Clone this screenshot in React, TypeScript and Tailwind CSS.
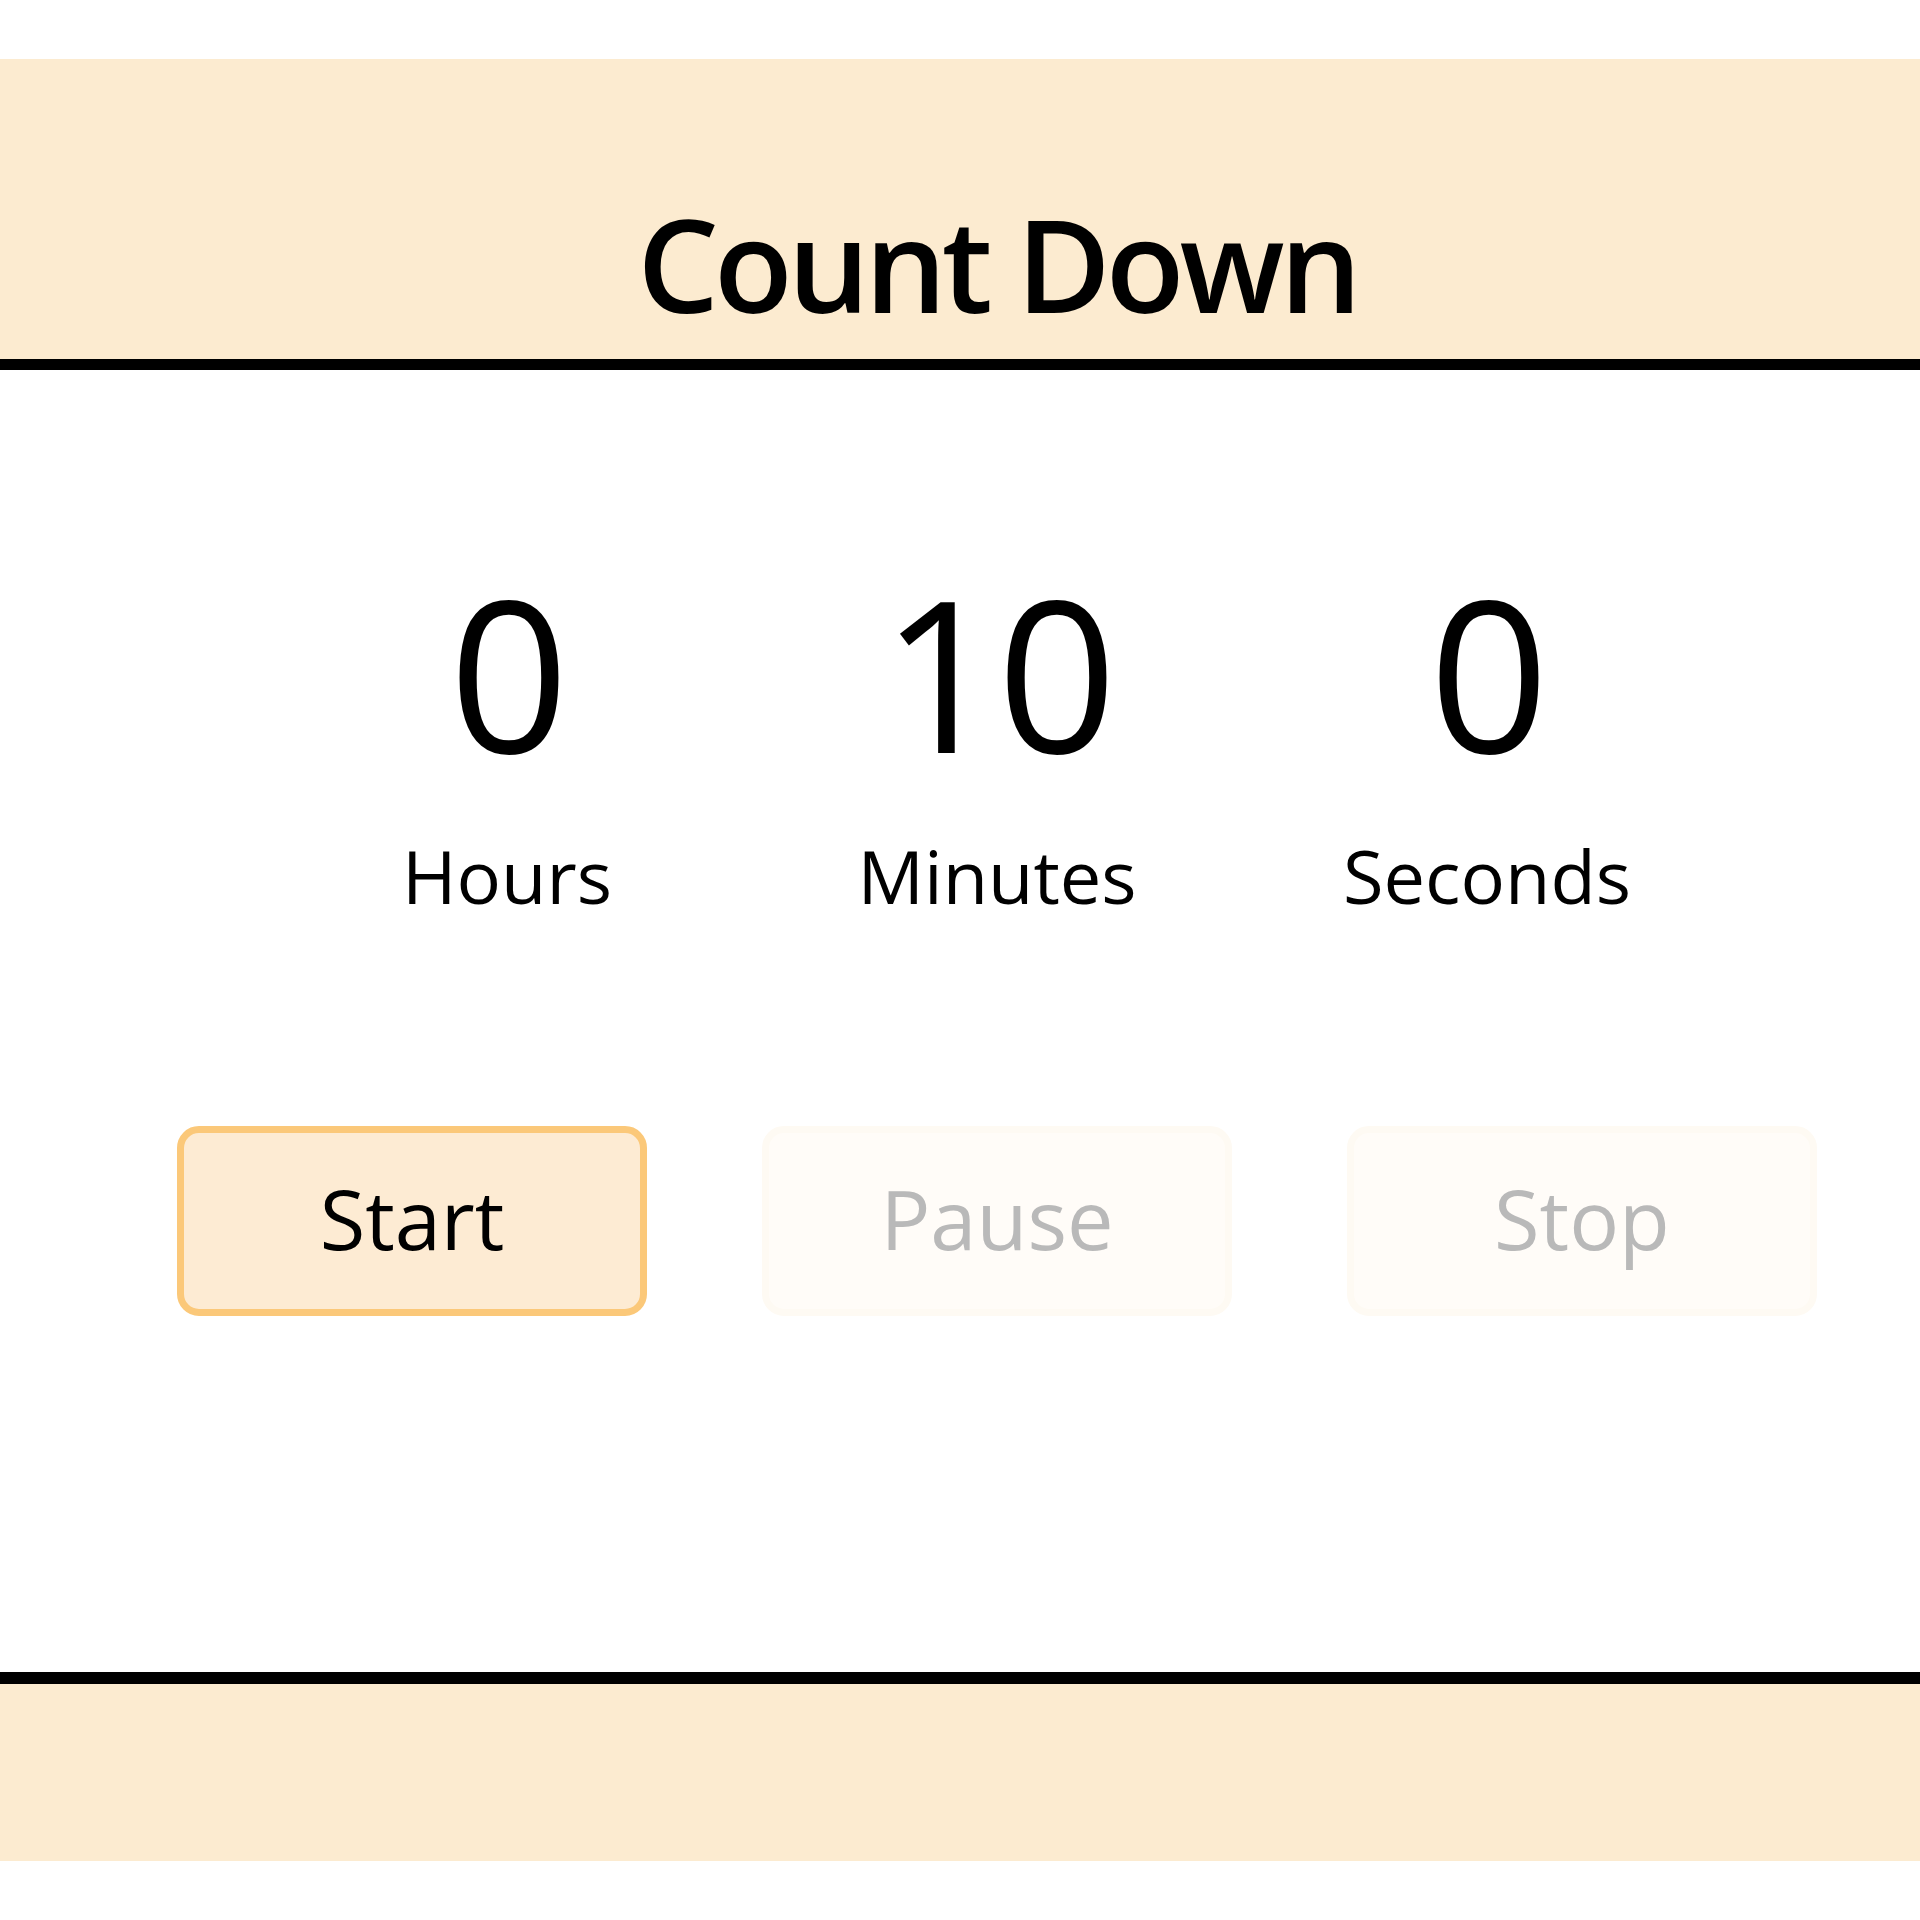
import React from 'react';

const units = [
  { value: 0, label: 'Hours' },
  { value: 10, label: 'Minutes' },
  { value: 0, label: 'Seconds' },
];

const App = () => {
  return (
    <div className="w-full h-[1920px] bg-white pt-[59px] font-['Open_Sans',sans-serif] text-black overflow-hidden">
      {/* Header */}
      <header className="h-[311px] bg-[#fcebd0] border-b-[11px] border-black pl-[74px] pt-[140px]">
        <h1 className="text-center text-[129px] leading-none font-semibold tracking-[-5px]">Count Down</h1>
      </header>

      {/* Timer */}
      <main className="h-[1302px] pl-[74px] pt-[197px]">
        <div className="grid grid-cols-3 w-[1470px] mx-auto">
          {units.map((u) => (
            <div key={u.label} className="flex flex-col items-center">
              <span className="text-[210px] leading-none font-medium tracking-[-4px]">{u.value}</span>
              <span className="mt-[62px] text-[74px] leading-none font-medium">{u.label}</span>
            </div>
          ))}
        </div>

        <div className="mt-[213px] flex justify-center gap-[115px]">
          <button className="w-[470px] h-[190px] rounded-[22px] border-[7px] border-[#fbc879] bg-[#fdebd3] text-[83px] leading-none text-black pb-[8px]">
            Start
          </button>
          <button className="w-[470px] h-[190px] rounded-[22px] border-[7px] border-[#fefaf3] bg-[#fffcf8] text-[83px] leading-none text-[#b9b9b9] pb-[8px]">
            Pause
          </button>
          <button className="w-[470px] h-[190px] rounded-[22px] border-[7px] border-[#fefaf3] bg-[#fffcf8] text-[83px] leading-none text-[#b9b9b9] pb-[8px]">
            Stop
          </button>
        </div>
      </main>

      {/* Footer */}
      <footer className="h-[189px] bg-[#fcebd0] border-t-[12px] border-black" />
    </div>
  );
};

export default App;
